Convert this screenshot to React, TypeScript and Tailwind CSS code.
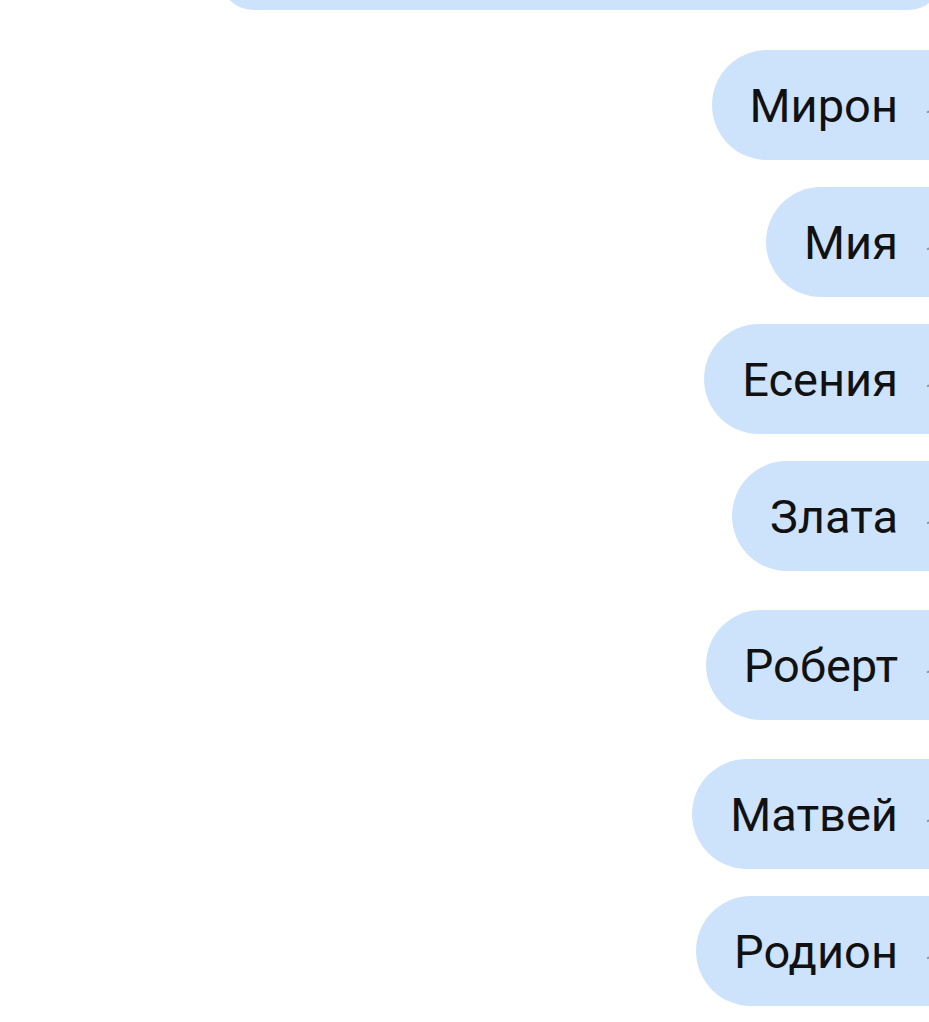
import React from "react";

interface Message {
  name: string;
  time: string;
  gapTop: number;
}

const messages: Message[] = [
  { name: "Мирон", time: "12:01", gapTop: 40 },
  { name: "Мия", time: "12:01", gapTop: 27 },
  { name: "Есения", time: "12:02", gapTop: 27 },
  { name: "Злата", time: "12:02", gapTop: 27 },
  { name: "Роберт", time: "12:03", gapTop: 39 },
  { name: "Матвей", time: "12:03", gapTop: 39 },
  { name: "Родион", time: "12:04", gapTop: 27 },
];

const gapClass: Record<number, string> = {
  27: "mt-[27px]",
  39: "mt-[39px]",
  40: "mt-[40px]",
};

const Bubble: React.FC<{ msg: Message }> = ({ msg }) => (
  <div className={`flex justify-end mr-[-92px] ${gapClass[msg.gapTop]}`}>
    <div className="flex items-center h-[110px] rounded-full bg-[#cde3fc] pl-[38px] pr-[16px]">
      <span className="text-[47px] leading-none text-[#111111] whitespace-nowrap">
        {msg.name}
      </span>
      <span className="ml-[27px] w-[80px] pt-[26px] text-[24px] leading-none text-[#8a96a3] whitespace-nowrap">
        {msg.time}
      </span>
    </div>
  </div>
);

const App: React.FC = () => {
  return (
    <div
      className="w-full h-[1022px] overflow-hidden bg-white"
      style={{ fontFamily: "Roboto, 'Noto Sans', sans-serif" }}
    >
      {/* previous message, mostly scrolled off */}
      <div className="flex justify-end">
        <div className="w-[720px] h-[110px] mt-[-100px] mr-[-12px] rounded-[32px] bg-[#cde3fc]" />
      </div>
      {messages.map((m) => (
        <Bubble key={m.name} msg={m} />
      ))}
    </div>
  );
};

export default App;
